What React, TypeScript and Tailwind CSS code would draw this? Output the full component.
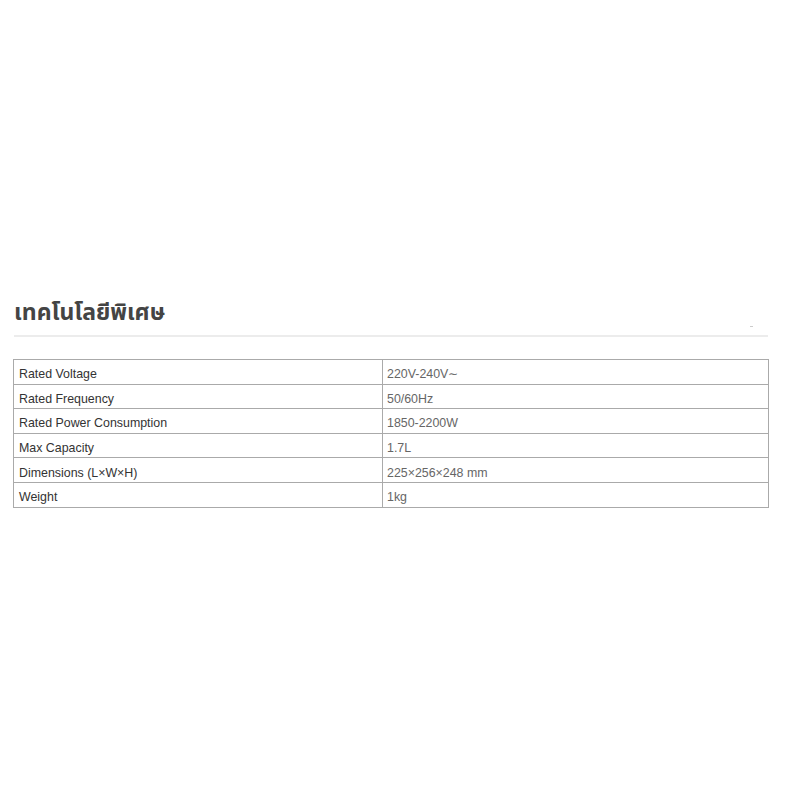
import React from "react";

const rows: [string, string][] = [
  ["Rated Voltage", "220V-240V∼"],
  ["Rated Frequency", "50/60Hz"],
  ["Rated Power Consumption", "1850-2200W"],
  ["Max Capacity", "1.7L"],
  ["Dimensions (L×W×H)", "225×256×248 mm"],
  ["Weight", "1kg"],
];

export default function App() {
  return (
    <div className="w-[800px] h-[800px] bg-white pt-[296px] pl-[13px] pr-[32px]" style={{ fontFamily: '"Liberation Sans", Arial, sans-serif' }}>
      <div className="relative">
        <h2 className="pl-px text-[23px] leading-[30px] font-bold text-[#444]" style={{ fontFamily: '"Noto Sans", "Noto Sans Thai", "Liberation Sans", sans-serif' }}>
          เทคโนโลยีพิเศษ
        </h2>
        <div className="mt-[9px] ml-px h-[2px] bg-[#ececec]" />
        <div className="absolute right-[15px] top-[30px] w-[3px] h-px bg-[#ccc]" />
      </div>
      <table className="mt-[22px] w-[756px] border-collapse border border-[#999] text-[12.4px] text-[#333]">
        <tbody>
          {rows.map(([k, v]) => (
            <tr key={k} className="h-[24.6px]">
              <td className="w-[369px] border border-[#aaa] pl-[5px] pb-0 pt-[5px] leading-[18px]">{k}</td>
              <td className="border border-[#aaa] pl-[4px] pb-0 pt-[5px] leading-[18px] text-[#666]">{v}</td>
            </tr>
          ))}
        </tbody>
      </table>
    </div>
  );
}
